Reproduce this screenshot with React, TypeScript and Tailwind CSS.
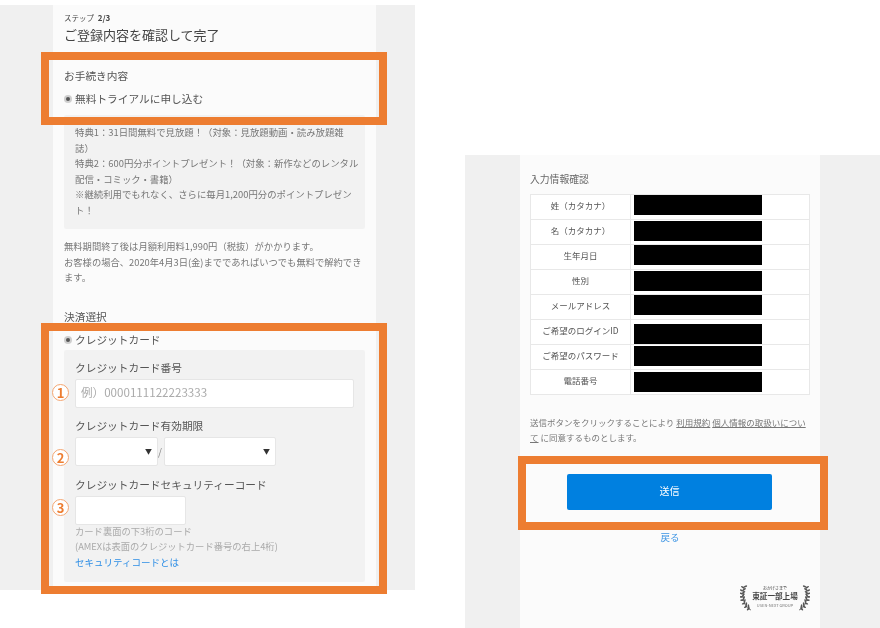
import React from 'react';

const rows = [
  { label: '姓（カタカナ）', bar: 'mt-[0px]' },
  { label: '名（カタカナ）', bar: 'mt-[1px]' },
  { label: '生年月日', bar: 'mt-[0px]' },
  { label: '性別', bar: 'mt-[1px]' },
  { label: 'メールアドレス', bar: 'mt-[0px]' },
  { label: 'ご希望のログインID', bar: 'mt-[4px]' },
  { label: 'ご希望のパスワード', bar: 'mt-[1px]' },
  { label: '電話番号', bar: 'mt-[2px]' },
];

const Radio = () => (
  <span className="mr-[3px] inline-flex h-[8px] w-[8px] items-center justify-center rounded-full bg-[#cfcfcf]">
    <span className="h-[4px] w-[4px] rounded-full bg-[#555]" />
  </span>
);

const Num = ({ n, className }: { n: number; className: string }) => (
  <span
    className={`absolute left-[52px] flex h-[17px] w-[17px] items-center justify-center rounded-full border border-[#f4a672] bg-white text-[13px] font-bold leading-none text-[#ed7d31] ${className}`}
  >
    {n}
  </span>
);

const Frame = ({ className }: { className: string }) => (
  <div className={`absolute border-[8px] border-[#ed7d31] ${className}`} />
);

const Laurel = ({ flip }: { flip?: boolean }) => (
  <svg width="13" height="27" viewBox="0 0 13 27" className={flip ? '-scale-x-100' : ''}>
    <path d="M11 25C5 23 2 16 4 3" fill="none" stroke="#555" strokeWidth="0.8" />
    {[
      [4, 3, -15],
      [3, 6, -20],
      [2.6, 9, -25],
      [2.8, 12, -40],
      [3.6, 15, -50],
      [5, 18, -65],
      [7, 21, -75],
      [9.5, 23, -85],
    ].map(([x, y, r], i) => (
      <g key={i} transform={`translate(${x} ${y})`}>
        <ellipse cx="-1.4" cy="0" rx="2" ry="0.8" fill="#555" transform={`rotate(${r + 45})`} />
        <ellipse cx="1.8" cy="-0.8" rx="2" ry="0.8" fill="#555" transform={`rotate(${r - 10})`} />
      </g>
    ))}
  </svg>
);

const LeftPage = () => (
  <div className="mt-[5px] flex h-[585px] w-[415px] shrink-0 justify-start bg-[#f0f0f0] pl-[53px]">
    <div className="h-full w-[323px] bg-[#fbfbfb] px-[11px] text-[#555]">
      <p className="mt-[6px] text-[7.5px] leading-[14px] text-[#444]">
        ステップ <b className="ml-[2px] text-[8px]">2/3</b>
      </p>
      <h1 className="mt-[-1px] text-[13px] leading-[22px] text-[#444]">ご登録内容を確認して完了</h1>
      <p className="mt-[22px] text-[10.7px] leading-[16px]">お手続き内容</p>
      <p className="mt-[7px] flex items-center text-[10.7px] leading-[16px]">
        <Radio />
        無料トライアルに申し込む
      </p>
      <div className="mt-[8px] h-[114px] whitespace-nowrap rounded-[2px] bg-[#f2f2f2] px-[11px] pt-[10px] text-[9.4px] leading-[15.5px] text-[#777]">
        特典1：31日間無料で見放題！（対象：見放題動画・読み放題雑
        <br />
        誌）
        <br />
        特典2：600円分ポイントプレゼント！（対象：新作などのレンタル
        <br />
        配信・コミック・書籍）
        <br />
        ※継続利用でもれなく、さらに毎月1,200円分のポイントプレゼン
        <br />
        ト！
      </div>
      <p className="mt-[10px] whitespace-nowrap text-[9.3px] leading-[15.5px] text-[#777]">
        無料期間終了後は月額利用料1,990円（税抜）がかかります。
        <br />
        お客様の場合、2020年4月3日(金)までであればいつでも無料で解約でき
        <br />
        ます。
      </p>
      <p className="mt-[23px] text-[10.7px] leading-[16px]">決済選択</p>
      <p className="mt-[7px] flex items-center text-[10.7px] leading-[16px]">
        <Radio />
        クレジットカード
      </p>
      <div className="mt-[2px] h-[232px] rounded-[2px] bg-[#f2f2f2] px-[11px] pt-[10px]">
        <p className="text-[10.7px] leading-[16px]">クレジットカード番号</p>
        <div className="mt-[3px] flex h-[29px] w-[279px] items-center rounded-[2px] border border-[#e6e6e6] bg-white pl-[5px] text-[11.6px] text-[#aaa]">
          例）0000111122223333
        </div>
        <p className="mt-[10px] text-[10.7px] leading-[16px]">クレジットカード有効期限</p>
        <div className="mt-[3px] flex items-center">
          <div className="flex h-[29px] w-[83px] items-center justify-end rounded-[2px] border border-[#e6e6e6] bg-white pr-[5px] text-[7px] text-[#333]">
            ▼
          </div>
          <span className="w-[6px] text-[10px] text-[#888]">/</span>
          <div className="flex h-[29px] w-[112px] items-center justify-end rounded-[2px] border border-[#e6e6e6] bg-white pr-[5px] text-[7px] text-[#333]">
            ▼
          </div>
        </div>
        <p className="mt-[11px] text-[10.7px] leading-[16px]">クレジットカードセキュリティーコード</p>
        <div className="mt-[3px] h-[29px] w-[111px] rounded-[2px] border border-[#e6e6e6] bg-white" />
        <p className="mt-[-1px] text-[9.3px] leading-[15.5px] text-[#aaa]">
          カード裏面の下3桁のコード
          <br />
          (AMEXは表面のクレジットカード番号の右上4桁)
        </p>
        <a className="block text-[9.5px] leading-[15.5px] text-[#2f8fe6]">セキュリティコードとは</a>
      </div>
    </div>
  </div>
);

const RightPage = () => (
  <div className="ml-[50px] mt-[155px] flex h-[473px] w-[415px] shrink-0 bg-[#f0f0f0] pl-[55px]">
    <div className="h-full w-[300px] bg-[#fbfbfb] px-[10px] text-[#666]">
      <p className="mt-[16px] text-[9.8px] leading-[16px]">入力情報確認</p>
      <div className="mt-[7px] w-[280px] border border-b-0 border-[#e8e8e8] bg-white">
        {rows.map(r => (
          <div key={r.label} className="flex h-[25px] border-b border-[#e8e8e8]">
            <div className="flex w-[100px] items-center justify-center border-r border-[#e8e8e8] pb-[3px] text-[8.5px] text-[#555]">
              {r.label}
            </div>
            <div className="pl-[3px]">
              <div className={`h-[20px] w-[128px] bg-black ${r.bar}`} />
            </div>
          </div>
        ))}
      </div>
      <p className="mt-[20px] whitespace-nowrap text-[8.5px] leading-[14.5px] text-[#777]">
        送信ボタンをクリックすることにより <span className="underline">利用規約</span>{' '}
        <span className="underline">個人情報の取扱いについ</span>
        <br />
        <span className="underline">て</span> に同意するものとします。
      </p>
      <div className="ml-[37px] mt-[30px] flex h-[36px] w-[205px] items-center justify-center rounded-[2px] bg-[#0080e0] pb-[3px] text-[10px] text-white">
        送信
      </div>
      <p className="mt-[20px] text-center text-[9.5px] leading-[14px] text-[#3b94e4]">戻る</p>
      <div className="mt-[41px] flex justify-end">
        <Laurel />
        <div className="flex w-[44px] flex-col items-center text-[#444]">
          <span className="text-[4px] leading-[6px]">おかげさまで</span>
          <span className="whitespace-nowrap text-[7.6px] font-bold leading-[10px]">東証一部上場</span>
          <span className="mt-[2px] whitespace-nowrap text-[4px] leading-[5px] text-[#777]">USEN-NEXT GROUP</span>
        </div>
        <Laurel flip />
      </div>
    </div>
  </div>
);

export default function App() {
  return (
    <div className="relative flex h-[628px] w-[880px] overflow-hidden bg-white font-['Noto_Sans_CJK_JP','Liberation_Sans',sans-serif] blur-[0.5px]">
      <LeftPage />
      <RightPage />
      <Frame className="left-[41px] top-[52px] h-[73px] w-[346px]" />
      <Frame className="left-[41px] top-[323px] h-[271px] w-[346px]" />
      <Frame className="left-[518px] top-[456px] h-[74px] w-[310px]" />
      <Num n={1} className="top-[384px]" />
      <Num n={2} className="top-[449px]" />
      <Num n={3} className="top-[499px]" />
    </div>
  );
}
